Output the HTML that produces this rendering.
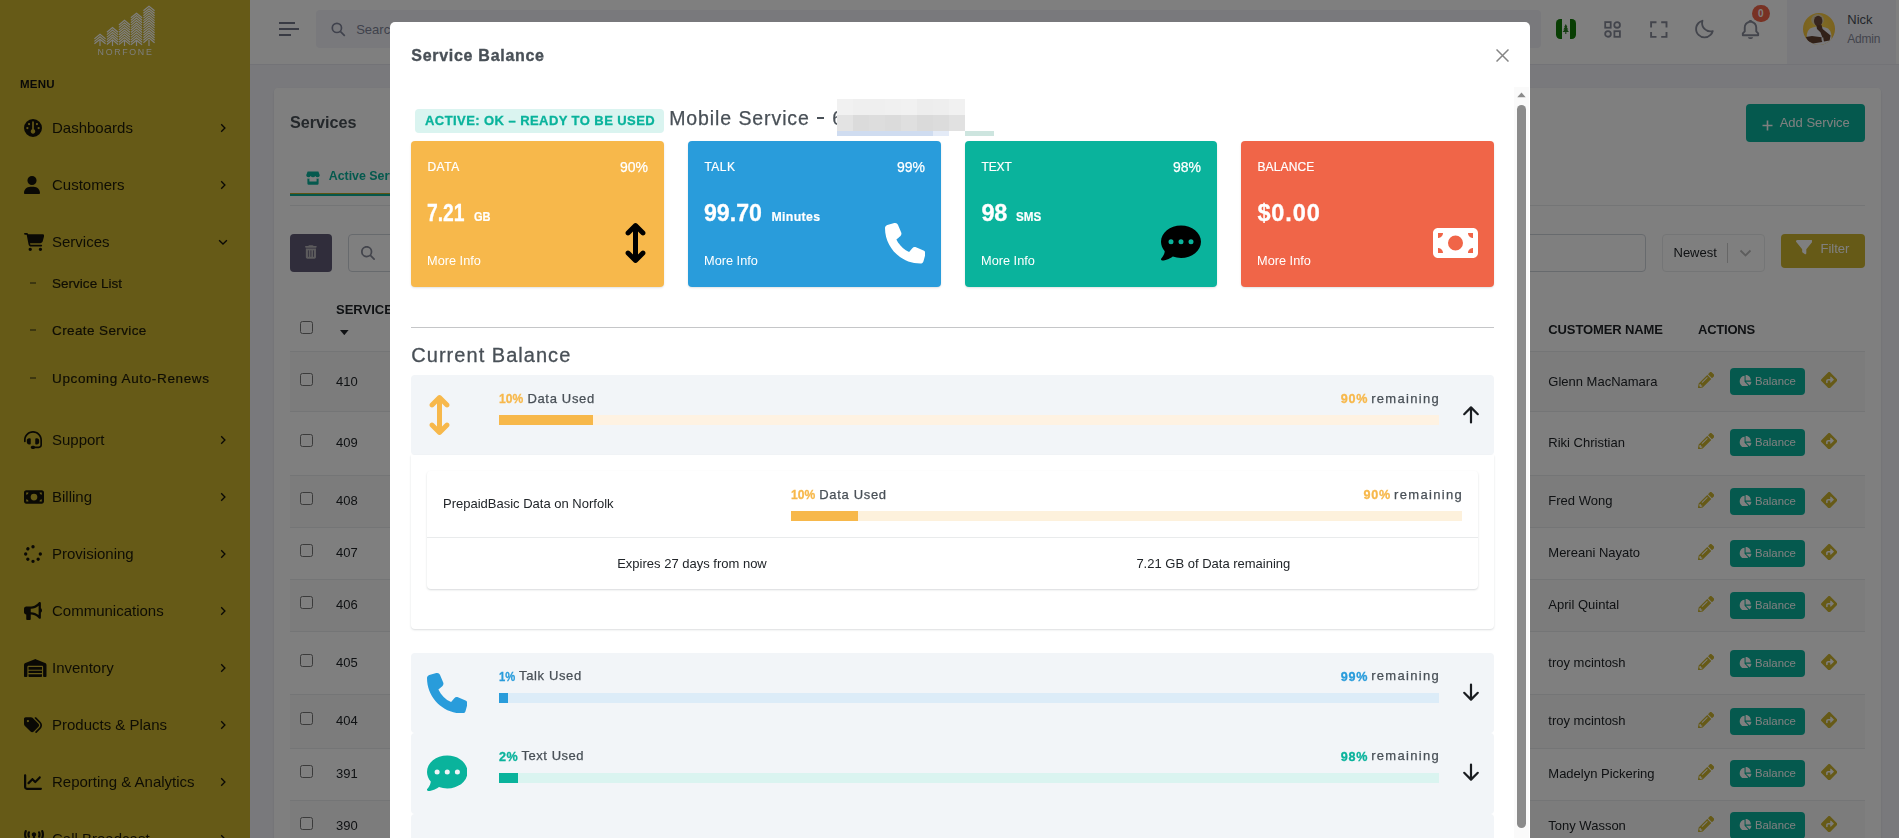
<!DOCTYPE html>
<html lang="en">
<head>
<meta charset="utf-8">
<title>Services</title>
<style>
*{box-sizing:border-box;margin:0;padding:0}
html,body{width:1899px;height:838px;overflow:hidden;background:#f3f3f9;font-family:"Liberation Sans",sans-serif;font-size:13px;color:#212529}
.abs{position:absolute}
#app{position:absolute;left:0;top:0;width:1899px;height:838px;overflow:hidden}
/* ---------- sidebar ---------- */
#sidebar{position:absolute;left:0;top:0;width:250px;height:838px;background:#ccb42e}
#sidebar .menu-title{position:absolute;left:20px;top:78px;font-size:11.5px;font-weight:bold;letter-spacing:.25px;color:#111}
.nav-item{position:absolute;left:0;width:250px;height:24px;color:#1d1a08;font-size:15px;line-height:24px}
.nav-item .ic{position:absolute;left:24px;top:3px;width:18px;height:18px}
.nav-item .ic svg{display:block;fill:#14120a}
.nav-item .tx{position:absolute;left:52px;top:0;white-space:nowrap}
.nav-item .chev{position:absolute;left:218px;top:7px;width:10px;height:10px}
.sub-item{position:absolute;left:0;width:250px;height:20px;color:#1d1a08;font-size:13.5px;line-height:20px}
.sub-item .dash{position:absolute;left:30px;top:9px;width:6px;height:2px;background:#7a6e20}
.sub-item .tx{position:absolute;left:52px;top:0;white-space:nowrap;-webkit-text-stroke:.2px #1d1a08}
/* ---------- topbar ---------- */
#topbar{position:absolute;left:250px;top:0;width:1649px;height:65px;background:#fff;border-bottom:1px solid #e6e6ee}
/* ---------- overlay & modal ---------- */
#overlay{position:absolute;left:0;top:0;width:1899px;height:838px;background:rgba(0,0,0,.5)}
#sidebar,#content,#modal{will-change:transform}
#content{position:absolute;left:0;top:0;width:1899px;height:838px}
#modal{position:absolute;left:390px;top:22px;width:1140px;height:830px;background:#fff;border-radius:5px 5px 0 0}
</style>
</head>
<body>
<div id="app">

<!-- SIDEBAR -->
<div id="sidebar">
  <svg class="abs" style="left:0;top:0" width="250" height="60" viewBox="0 0 250 60" fill="none" stroke="#fff" stroke-width="1.2" stroke-linejoin="miter"><polyline points="94.4,38.9 100.0,34.3 105.6,38.9"/><polyline points="94.4,41.4 100.0,36.8 105.6,41.4"/><polyline points="94.4,43.8 100.0,39.2 105.6,43.8"/><line x1="100" y1="40" x2="100" y2="46"/><polyline points="106.9,32.2 112.5,27.6 118.1,32.2"/><polyline points="106.9,34.6 112.5,30.1 118.1,34.6"/><polyline points="106.9,37.1 112.5,32.5 118.1,37.1"/><polyline points="106.9,39.6 112.5,35.0 118.1,39.6"/><polyline points="106.9,42.0 112.5,37.4 118.1,42.0"/><polyline points="106.9,44.5 112.5,39.9 118.1,44.5"/><line x1="112.5" y1="40" x2="112.5" y2="46"/><polyline points="118.9,25.0 124.5,20.4 130.1,25.0"/><polyline points="118.9,27.4 124.5,22.8 130.1,27.4"/><polyline points="118.9,29.9 124.5,25.3 130.1,29.9"/><polyline points="118.9,32.3 124.5,27.7 130.1,32.3"/><polyline points="118.9,34.8 124.5,30.2 130.1,34.8"/><polyline points="118.9,37.2 124.5,32.6 130.1,37.2"/><polyline points="118.9,39.7 124.5,35.1 130.1,39.7"/><polyline points="118.9,42.2 124.5,37.6 130.1,42.2"/><polyline points="118.9,44.6 124.5,40.0 130.1,44.6"/><line x1="124.5" y1="40" x2="124.5" y2="46"/><polyline points="130.9,17.8 136.5,13.2 142.1,17.8"/><polyline points="130.9,20.2 136.5,15.6 142.1,20.2"/><polyline points="130.9,22.7 136.5,18.1 142.1,22.7"/><polyline points="130.9,25.1 136.5,20.5 142.1,25.1"/><polyline points="130.9,27.6 136.5,23.0 142.1,27.6"/><polyline points="130.9,30.0 136.5,25.4 142.1,30.0"/><polyline points="130.9,32.5 136.5,27.9 142.1,32.5"/><polyline points="130.9,34.9 136.5,30.3 142.1,34.9"/><polyline points="130.9,37.4 136.5,32.8 142.1,37.4"/><polyline points="130.9,39.9 136.5,35.2 142.1,39.9"/><polyline points="130.9,42.3 136.5,37.7 142.1,42.3"/><polyline points="130.9,44.8 136.5,40.2 142.1,44.8"/><line x1="136.5" y1="40" x2="136.5" y2="46"/><polyline points="143.4,10.8 149.0,6.2 154.6,10.8"/><polyline points="143.4,13.2 149.0,8.7 154.6,13.2"/><polyline points="143.4,15.7 149.0,11.1 154.6,15.7"/><polyline points="143.4,18.1 149.0,13.6 154.6,18.1"/><polyline points="143.4,20.6 149.0,16.0 154.6,20.6"/><polyline points="143.4,23.0 149.0,18.4 154.6,23.0"/><polyline points="143.4,25.5 149.0,20.9 154.6,25.5"/><polyline points="143.4,27.9 149.0,23.3 154.6,27.9"/><polyline points="143.4,30.4 149.0,25.8 154.6,30.4"/><polyline points="143.4,32.8 149.0,28.2 154.6,32.8"/><polyline points="143.4,35.3 149.0,30.7 154.6,35.3"/><polyline points="143.4,37.8 149.0,33.1 154.6,37.8"/><polyline points="143.4,40.2 149.0,35.6 154.6,40.2"/><polyline points="143.4,42.7 149.0,38.1 154.6,42.7"/><line x1="149" y1="40" x2="149" y2="46"/></svg><div class="abs" style="left:97.6px;top:46.6px;width:60px;font-size:8.8px;font-weight:normal;letter-spacing:1.7px;color:#fbfbf4;white-space:nowrap;line-height:10px">NORFONE</div>
  <div class="menu-title">MENU</div>
<div class="nav-item" style="top:116px"><span class="ic" style="width:18px;height:18px;top:3.0px"><svg viewBox="0 0 512 512" style="width:18px;height:18px" preserveAspectRatio="none"><path d="M0 256a256 256 0 1 1 512 0A256 256 0 1 1 0 256zm320 96c0-26.900-16.500-49.900-40-59.300V88c0-13.300-10.700-24-24-24s-24 10.700-24 24V292.700c-23.500 9.500-40 32.500-40 59.300c0 35.300 28.700 64 64 64s64-28.700 64-64zM144 176a32 32 0 1 0 0-64 32 32 0 1 0 0 64zm-16 80a32 32 0 1 0 -64 0 32 32 0 1 0 64 0zm288 32a32 32 0 1 0 0-64 32 32 0 1 0 0 64zM400 144a32 32 0 1 0 -64 0 32 32 0 1 0 64 0z"/></svg></span><span class="tx">Dashboards</span><svg class="chev" viewBox="0 0 10 10"><path d="M3.2 1.3 L6.9 5 L3.2 8.7" fill="none" stroke="#14120a" stroke-width="1.35"/></svg></div>
<div class="nav-item" style="top:173px"><span class="ic" style="width:16px;height:18px;top:3.0px"><svg viewBox="0 0 448 512" style="width:16px;height:18px" preserveAspectRatio="none"><path d="M224 256A128 128 0 1 0 224 0a128 128 0 1 0 0 256zm-45.700 48C79.800 304 0 383.800 0 482.300C0 498.700 13.300 512 29.700 512H418.300c16.400 0 29.700-13.300 29.700-29.700C448 383.800 368.200 304 269.700 304H178.300z"/></svg></span><span class="tx">Customers</span><svg class="chev" viewBox="0 0 10 10"><path d="M3.2 1.3 L6.9 5 L3.2 8.7" fill="none" stroke="#14120a" stroke-width="1.35"/></svg></div>
<div class="nav-item" style="top:230px"><span class="ic" style="width:20.4px;height:18px;top:3.0px"><svg viewBox="0 0 576 512" style="width:20.4px;height:18px" preserveAspectRatio="none"><path d="M0 24C0 10.700 10.700 0 24 0H69.500c22 0 41.500 12.800 50.600 32h411c26.300 0 45.500 25 38.600 50.400l-41 152.300c-8.500 31.400-37 53.300-69.500 53.300H170.700l5.400 28.500c2.200 11.300 12.100 19.500 23.600 19.500H488c13.300 0 24 10.700 24 24s-10.700 24-24 24H199.700c-34.600 0-64.300-24.600-70.700-58.500L77.400 54.500c-.7-3.800-4-6.500-7.900-6.500H24C10.700 48 0 37.300 0 24zM128 464a48 48 0 1 1 96 0 48 48 0 1 1 -96 0zm336-48a48 48 0 1 1 0 96 48 48 0 1 1 0-96z"/></svg></span><span class="tx">Services</span><svg class="chev" viewBox="0 0 10 10"><path d="M1.1 3.3 L5 7.1 L8.9 3.3" fill="none" stroke="#14120a" stroke-width="1.35"/></svg></div>
<div class="nav-item" style="top:428px"><span class="ic" style="width:18px;height:18px;top:3.0px"><svg viewBox="0 0 512 512" style="width:18px;height:18px" preserveAspectRatio="none"><path d="M256 48C141.100 48 48 141.100 48 256v40c0 13.300-10.700 24-24 24s-24-10.700-24-24V256C0 114.600 114.600 0 256 0S512 114.600 512 256V400.100c0 48.600-39.400 88-88.100 88L313.600 488c-8.300 14.300-23.800 24-41.600 24H240c-26.500 0-48-21.500-48-48s21.500-48 48-48h32c17.800 0 33.300 9.700 41.600 24l110.400 .1c22.100 0 40-17.900 40-40V256c0-114.900-93.100-208-208-208zM144 208h16c17.700 0 32 14.300 32 32V352c0 17.700-14.300 32-32 32H144c-35.300 0-64-28.700-64-64V272c0-35.300 28.700-64 64-64zm224 0c35.300 0 64 28.700 64 64v48c0 35.300-28.700 64-64 64H352c-17.700 0-32-14.300-32-32V240c0-17.700 14.300-32 32-32h16z"/></svg></span><span class="tx">Support</span><svg class="chev" viewBox="0 0 10 10"><path d="M3.2 1.3 L6.9 5 L3.2 8.7" fill="none" stroke="#14120a" stroke-width="1.35"/></svg></div>
<div class="nav-item" style="top:485px"><span class="ic" style="width:20px;height:18px;top:3.0px"><svg viewBox="0 0 576 512" style="width:20px;height:18px" preserveAspectRatio="none"><path d="M64 64C28.700 64 0 92.700 0 128V384c0 35.300 28.700 64 64 64H512c35.300 0 64-28.700 64-64V128c0-35.300-28.700-64-64-64H64zm64 320H64V320c35.300 0 64 28.700 64 64zM64 192V128h64c0 35.300-28.700 64-64 64zM448 384c0-35.300 28.700-64 64-64v64H448zm64-192c-35.300 0-64-28.700-64-64h64v64zM288 160a96 96 0 1 1 0 192 96 96 0 1 1 0-192z"/></svg></span><span class="tx">Billing</span><svg class="chev" viewBox="0 0 10 10"><path d="M3.2 1.3 L6.9 5 L3.2 8.7" fill="none" stroke="#14120a" stroke-width="1.35"/></svg></div>
<div class="nav-item" style="top:542px"><span class="ic" style="width:18px;height:18px;top:3.0px"><svg viewBox="0 0 512 512" style="width:18px;height:18px" preserveAspectRatio="none"><path d="M304 48a48 48 0 1 0 -96 0 48 48 0 1 0 96 0zm0 416a48 48 0 1 0 -96 0 48 48 0 1 0 96 0zM48 304a48 48 0 1 0 0-96 48 48 0 1 0 0 96zm464-48a48 48 0 1 0 -96 0 48 48 0 1 0 96 0zM142.900 437A48 48 0 1 0 75 369.100 48 48 0 1 0 142.900 437zm0-294.200A48 48 0 1 0 75 75a48 48 0 1 0 67.900 67.900zM369.100 437A48 48 0 1 0 437 369.100 48 48 0 1 0 369.100 437z"/></svg></span><span class="tx">Provisioning</span><svg class="chev" viewBox="0 0 10 10"><path d="M3.2 1.3 L6.9 5 L3.2 8.7" fill="none" stroke="#14120a" stroke-width="1.35"/></svg></div>
<div class="nav-item" style="top:599px"><span class="ic" style="width:18px;height:18px;top:3.0px"><svg viewBox="0 0 512 512" style="width:18px;height:18px" preserveAspectRatio="none"><path d="M480 32c0-12.900-7.800-24.600-19.800-29.600s-25.700-2.200-34.900 6.900L381.700 53c-48 48-113.100 75-181 75H192 160 64c-35.300 0-64 28.700-64 64v96c0 35.300 28.700 64 64 64l0 128c0 17.700 14.300 32 32 32h64c17.700 0 32-14.300 32-32V352l8.700 0c67.900 0 133 27 181 75l43.600 43.600c9.200 9.200 22.900 11.900 34.900 6.900s19.800-16.600 19.800-29.600V300.400c18.600-8.800 32-32.500 32-60.400s-13.400-51.600-32-60.400V32zm-64 76.700V240 371.300C357.200 317.800 280.500 288 200.700 288H192V192h8.700c79.800 0 156.500-29.800 215.300-83.300z"/></svg></span><span class="tx">Communications</span><svg class="chev" viewBox="0 0 10 10"><path d="M3.2 1.3 L6.9 5 L3.2 8.7" fill="none" stroke="#14120a" stroke-width="1.35"/></svg></div>
<div class="nav-item" style="top:656px"><span class="ic" style="width:22.5px;height:18px;top:3.0px"><svg viewBox="0 0 640 512" style="width:22.5px;height:18px" preserveAspectRatio="none"><path d="M0 488V171.300c0-26.200 15.900-49.700 40.200-59.400L308.100 4.800c7.600-3.100 16.100-3.100 23.800 0L599.800 111.900c24.300 9.700 40.200 33.300 40.200 59.400V488c0 13.300-10.700 24-24 24H568c-13.300 0-24-10.700-24-24V224c0-17.700-14.300-32-32-32H128c-17.700 0-32 14.300-32 32V488c0 13.300-10.700 24-24 24H24c-13.300 0-24-10.700-24-24zm488 24l-336 0c-13.300 0-24-10.700-24-24V432H512l0 56c0 13.300-10.700 24-24 24zM128 400V336H512v64H128zm0-96V224H512l0 80H128z"/></svg></span><span class="tx">Inventory</span><svg class="chev" viewBox="0 0 10 10"><path d="M3.2 1.3 L6.9 5 L3.2 8.7" fill="none" stroke="#14120a" stroke-width="1.35"/></svg></div>
<div class="nav-item" style="top:713px"><span class="ic" style="width:18px;height:18px;top:3.0px"><svg viewBox="0 0 512 512" style="width:18px;height:18px" preserveAspectRatio="none"><path d="M345 39.100L472.800 168.400c52.400 53 52.400 138.200 0 191.200L360.800 472.900c-9.300 9.400-24.500 9.500-33.900 .2s-9.500-24.500-.2-33.900L438.600 325.900c33.900-34.300 33.900-89.400 0-123.700L310.900 72.900c-9.300-9.400-9.200-24.600 .2-33.900s24.600-9.200 33.900 .2zM0 229.500V80C0 53.500 21.500 32 48 32H197.500c17 0 33.300 6.700 45.300 18.700l168 168c25 25 25 65.500 0 90.500L277.300 442.700c-25 25-65.500 25-90.500 0l-168-168C6.700 262.700 0 246.500 0 229.500zM144 144a32 32 0 1 0 -64 0 32 32 0 1 0 64 0z"/></svg></span><span class="tx">Products &amp; Plans</span><svg class="chev" viewBox="0 0 10 10"><path d="M3.2 1.3 L6.9 5 L3.2 8.7" fill="none" stroke="#14120a" stroke-width="1.35"/></svg></div>
<div class="nav-item" style="top:770px"><span class="ic" style="width:18px;height:18px;top:3.0px"><svg viewBox="0 0 512 512" style="width:18px;height:18px" preserveAspectRatio="none"><path d="M64 64c0-17.700-14.300-32-32-32S0 46.300 0 64V400c0 44.200 35.800 80 80 80H480c17.700 0 32-14.300 32-32s-14.300-32-32-32H80c-8.800 0-16-7.200-16-16V64zm406.600 86.600c12.500-12.500 12.500-32.800 0-45.300s-32.800-12.500-45.300 0L320 210.700l-57.400-57.400c-12.500-12.500-32.800-12.500-45.300 0l-112 112c-12.500 12.500-12.500 32.800 0 45.300s32.800 12.500 45.300 0L240 221.300l57.400 57.400c12.500 12.500 32.800 12.500 45.300 0l128-128z"/></svg></span><span class="tx">Reporting &amp; Analytics</span><svg class="chev" viewBox="0 0 10 10"><path d="M3.2 1.3 L6.9 5 L3.2 8.7" fill="none" stroke="#14120a" stroke-width="1.35"/></svg></div>
<div class="nav-item" style="top:827px"><span class="ic" style="width:20px;height:18px;top:3.0px"><svg viewBox="0 0 576 512" style="width:20px;height:18px" preserveAspectRatio="none"><path d="M80.300 44C69.800 69.900 64 98.200 64 128s5.800 58.100 16.300 84c6.600 16.400-1.300 35-17.700 41.700s-35-1.300-41.700-17.700C7.400 202.600 0 166.100 0 128S7.400 53.400 20.900 20C27.600 3.600 46.200-4.300 62.600 2.300S86.900 27.600 80.300 44zM555.100 20C568.600 53.400 576 89.900 576 128s-7.400 74.600-20.900 108c-6.600 16.400-25.300 24.300-41.700 17.700S489.100 228.400 495.700 212c10.500-25.900 16.300-54.200 16.300-84s-5.800-58.100-16.300-84C489.100 27.600 497 9 513.400 2.300s35 1.300 41.700 17.700zM352 128c0 23.700-12.900 44.400-32 55.400V480c0 17.700-14.300 32-32 32s-32-14.300-32-32V183.400c-19.100-11.100-32-31.700-32-55.400c0-35.300 28.700-64 64-64s64 28.700 64 64zM170.600 76.800C163.800 92.400 160 109.700 160 128s3.800 35.600 10.600 51.200c7.100 16.200-.3 35.100-16.500 42.100s-35.100-.3-42.100-16.500c-10.300-23.600-16-49.600-16-76.800s5.700-53.200 16-76.800c7.100-16.200 25.900-23.600 42.100-16.500s23.600 25.900 16.500 42.100zM464 51.200c10.300 23.600 16 49.600 16 76.800s-5.700 53.200-16 76.800c-7.100 16.200-25.900 23.600-42.100 16.500s-23.600-25.900-16.500-42.100c6.800-15.600 10.600-32.900 10.600-51.200s-3.800-35.600-10.600-51.200c-7.100-16.200 .3-35.100 16.500-42.100s35.100 .3 42.100 16.500z"/></svg></span><span class="tx">Call Broadcast</span><svg class="chev" viewBox="0 0 10 10"><path d="M3.2 1.3 L6.9 5 L3.2 8.7" fill="none" stroke="#14120a" stroke-width="1.35"/></svg></div>
<div class="sub-item" style="top:273px"><span class="dash"></span><span class="tx" style="top:.5px;letter-spacing:0.02px">Service List</span></div>
<div class="sub-item" style="top:320px"><span class="dash"></span><span class="tx" style="top:.5px;letter-spacing:0.39px">Create Service</span></div>
<div class="sub-item" style="top:368px"><span class="dash"></span><span class="tx" style="top:.5px;letter-spacing:0.64px">Upcoming Auto-Renews</span></div>
</div>

<!-- TOPBAR -->
<div id="topbar">
<div class="abs" style="left:29px;top:22px;width:16px;height:2px;background:#727688"></div>
<div class="abs" style="left:29px;top:28px;width:20px;height:2px;background:#727688"></div>
<div class="abs" style="left:29px;top:34px;width:12px;height:2px;background:#727688"></div>
<div class="abs" style="left:66px;top:10px;width:1225px;height:38px;background:#f3f3f9;border-radius:4px"></div>
<svg class="abs" style="left:80.5px;top:21.8px" width="15" height="15" viewBox="0 0 15 15" fill="none" stroke="#80859a" stroke-width="1.7"><circle cx="5.9" cy="5.9" r="4.6"/><path d="M9.3 9.3 L13.8 13.8"/></svg>
<div class="abs" style="left:106.2px;top:22.2px;font-size:13px;line-height:16px;color:#7f8498">Search...</div>
<div class="abs" style="left:1306px;top:19px;width:20px;height:20px;border-radius:4.2px;overflow:hidden;background:#fff"><div class="abs" style="left:0;top:0;width:6.3px;height:20px;background:#107c06"></div><div class="abs" style="left:13.8px;top:0;width:6.2px;height:20px;background:#107c06"></div><svg class="abs" style="left:5.9px;top:4.7px" width="7.6" height="10" viewBox="0 0 7 10" preserveAspectRatio="none"><path d="M3.5 0 L5 3 L4.3 3 L5.8 5.5 L4.6 5.5 L6.5 8 L4 8 L4 10 L3 10 L3 8 L0.5 8 L2.4 5.5 L1.2 5.5 L2.7 3 L2 3 Z" fill="#2a7a22"/></svg></div>
<svg class="abs" style="left:1353px;top:20px" width="19" height="19" viewBox="0 0 19 19" fill="none" stroke="#878a99" stroke-width="1.8"><rect x="2.2" y="2.1" width="5.5" height="5.6"/><circle cx="14.1" cy="4.9" r="2.85"/><circle cx="5" cy="13.9" r="2.85"/><rect x="11.4" y="11.2" width="5.5" height="5.6"/></svg>
<svg class="abs" style="left:1399px;top:20px" width="20" height="20" viewBox="0 0 20 20" fill="none" stroke="#878a99" stroke-width="1.9"><path d="M2.1 7.5 V2.2 H7.5 M12.2 2.2 H17.5 V7.5 M17.5 12 V16.9 H12.2 M7.5 16.9 H2.1 V12"/></svg>
<svg class="abs" style="left:1443.4px;top:18px" width="22.5" height="22.5" viewBox="0 0 24 24"><path fill="#878a99" d="M20.742 13.045a8.088 8.088 0 0 1-2.077.271c-2.135 0-4.140-.830-5.646-2.336a8.025 8.025 0 0 1-2.064-7.723A1 1 0 0 0 9.730 2.034a10.014 10.014 0 0 0-4.489 2.582c-3.898 3.898-3.898 10.243 0 14.143a9.937 9.937 0 0 0 7.072 2.930 9.930 9.930 0 0 0 7.070-2.929 10.007 10.007 0 0 0 2.583-4.491 1.001 1.001 0 0 0-1.224-1.224zm-2.772 4.301a7.947 7.947 0 0 1-5.656 2.343 7.953 7.953 0 0 1-5.658-2.344c-3.118-3.119-3.118-8.195 0-11.314a7.923 7.923 0 0 1 2.060-1.483 10.027 10.027 0 0 0 2.890 7.848 9.972 9.972 0 0 0 7.848 2.891 8.036 8.036 0 0 1-1.484 2.059z"/></svg>
<svg class="abs" style="left:1489.2px;top:18px" width="23" height="23" viewBox="0 0 24 24"><path fill="#878a99" d="M19 13.586V10c0-3.217-2.185-5.927-5.145-6.742C13.562 2.520 12.846 2 12 2s-1.562.520-1.855 1.258C7.185 4.074 5 6.783 5 10v3.586l-1.707 1.707A.996.996 0 0 0 3 16v2a1 1 0 0 0 1 1h16a1 1 0 0 0 1-1v-2a.996.996 0 0 0-.293-.707L19 13.586zM19 17H5v-.586l1.707-1.707A.996.996 0 0 0 7 14v-4c0-2.757 2.243-5 5-5s5 2.243 5 5v4c0 .266.105.520.293.707L19 16.414V17zm-7 5a2.980 2.980 0 0 0 2.818-2H9.182A2.980 2.980 0 0 0 12 22z"/></svg>
<div class="abs" style="left:1502px;top:4.6px;width:17.8px;height:17.8px;border-radius:9px;background:#f06548;color:#fff;font-size:10px;font-weight:bold;text-align:center;line-height:18px">0</div>
<div class="abs" style="left:1537px;top:0;width:109px;height:64px;background:#f3f3f9"></div>
<div class="abs" style="left:1553px;top:13px;width:32px;height:32px;border-radius:16px;overflow:hidden;background:radial-gradient(circle at 50% 40%,#ffd84e 0,#f6c63e 60%,#e9b433 100%)"><svg width="32" height="32" viewBox="0 0 32 32" class="abs" style="left:0;top:0"><ellipse cx="14.6" cy="6.8" rx="6.4" ry="5.8" fill="#e3d3aa"/><ellipse cx="15.2" cy="8" rx="4.2" ry="5.3" fill="#6e4b3a"/><path d="M3.6 25 Q3.6 15.6 9.6 14.4 L13.5 13.4 L18.5 13.4 L22.4 14.4 Q28.6 15.6 28.6 25 L28.6 32 L3.6 32 Z" fill="#f3f3f7"/><path d="M13.4 12.6 L18.6 12 L19.6 16 L27.6 22.6 L26.6 27.6 L21 28.4 L17.4 19.2 L14 16 Z" fill="#62402f"/><path d="M2.8 24 L9 22.9 L18.6 24.3 L19.2 29 L10 30.4 L5 28.6 Z" fill="#62402f"/><rect x="18.7" y="24.6" width="1.7" height="3.2" fill="#ececee"/></svg></div>
<div class="abs" style="left:1597.3px;top:11.5px;font-size:13px;line-height:16px;color:#495057">Nick</div>
<div class="abs" style="left:1597.3px;top:31px;font-size:12px;line-height:16px;color:#878a99;letter-spacing:-.2px">Admin</div>
</div>

<!-- PAGE CONTENT -->
<div id="content">
<div class="abs" style="left:274px;top:88px;width:1607px;height:800px;background:#fff;border-radius:4px;box-shadow:0 1px 2px rgba(56,65,74,.15)"></div>
<div class="abs" style="left:290px;top:112px;font-size:16.2px;line-height:20px;color:#495057;font-weight:bold;letter-spacing:0">Services</div>
<div class="abs" style="left:1746px;top:104px;width:119px;height:38px;border-radius:4px;background:#0ab39c"></div>
<svg class="abs" style="left:1761.5px;top:119.6px" width="11" height="11" viewBox="0 0 11 11" stroke="#fff" stroke-width="1.6"><path d="M5.5 0.5 V10.5 M0.5 5.5 H10.5"/></svg>
<div class="abs" style="left:1779.7px;top:115.2px;font-size:13px;line-height:16px;color:#fff">Add Service</div>
<svg class="abs" style="left:306px;top:171px" width="14" height="14" viewBox="0 0 14 14"><path d="M1.6 0.4 H12.4 L13.8 4.2 Q13.6 6.3 11.6 6.3 Q10 6.3 9.3 5 Q8.5 6.3 7 6.3 Q5.5 6.3 4.7 5 Q4 6.3 2.4 6.3 Q0.4 6.3 0.2 4.2 Z M1.4 7.6 Q2.4 7.9 3.4 7.6 V10.6 H10.6 V7.6 Q11.6 7.9 12.6 7.6 V12.6 Q12.6 13.8 11.4 13.8 H2.6 Q1.4 13.8 1.4 12.6 Z" fill="#0ab39c"/></svg>
<div class="abs" style="left:328.7px;top:167.7px;font-size:12.4px;line-height:16px;font-weight:bold;color:#0ab39c;white-space:nowrap">Active Services</div>
<div class="abs" style="left:290px;top:193px;width:300px;height:3px;background:#bfa626"></div>
<div class="abs" style="left:290px;top:193.5px;width:300px;height:2px;background:#0cae97"></div>
<div class="abs" style="left:290px;top:205px;width:1575px;height:1px;background:#e9ebec"></div>
<div class="abs" style="left:290px;top:234px;width:42px;height:38px;border-radius:4px;background:#605b77"></div>
<svg class="abs" style="left:305.3px;top:245.3px" width="11.8" height="13.8" viewBox="0 0 448 512"><path d="M135.200 17.700C140.600 6.800 151.700 0 163.800 0H284.200c12.100 0 23.200 6.800 28.600 17.700L320 32h96c17.700 0 32 14.300 32 32s-14.300 32-32 32H32C14.300 96 0 81.700 0 64S14.300 32 32 32h96l7.200-14.300zM32 128H416V448c0 35.300-28.700 64-64 64H96c-35.300 0-64-28.700-64-64V128zm96 64c-8.800 0-16 7.200-16 16V432c0 8.800 7.200 16 16 16s16-7.200 16-16V208c0-8.800-7.200-16-16-16zm96 0c-8.800 0-16 7.200-16 16V432c0 8.800 7.200 16 16 16s16-7.200 16-16V208c0-8.800-7.200-16-16-16zm96 0c-8.800 0-16 7.200-16 16V432c0 8.800 7.200 16 16 16s16-7.200 16-16V208c0-8.800-7.200-16-16-16z" fill="#b9b6bb"/></svg>
<div class="abs" style="left:348px;top:234px;width:1298px;height:38px;border-radius:4px;border:1px solid #ced4da;background:#fff"></div>
<svg class="abs" style="left:361px;top:246px" width="14" height="14" viewBox="0 0 512 512"><path d="M416 208c0 45.900-14.900 88.300-40 122.700L502.600 457.400c12.500 12.500 12.500 32.800 0 45.300s-32.800 12.500-45.300 0L330.700 376c-34.400 25.200-76.800 40-122.700 40C93.100 416 0 322.900 0 208S93.100 0 208 0S416 93.100 416 208zM208 352a144 144 0 1 0 0-288 144 144 0 1 0 0 288z" fill="#878a99"/></svg>
<div class="abs" style="left:1662px;top:234px;width:103px;height:38px;border-radius:4px;border:1px solid #e9ebec;background:#fff"></div>
<div class="abs" style="left:1673.5px;top:245px;font-size:13px;line-height:16px;color:#212529">Newest</div>
<div class="abs" style="left:1727px;top:243px;width:1px;height:20px;background:#ccc"></div>
<svg class="abs" style="left:1739px;top:249px" width="13" height="9" viewBox="0 0 13 9" fill="none" stroke="#bbb" stroke-width="1.8"><path d="M1.5 1.5 L6.5 6.5 L11.5 1.5"/></svg>
<div class="abs" style="left:1781px;top:234px;width:84px;height:34px;border-radius:4px;background:#ccb42e"></div>
<svg class="abs" style="left:1795.8px;top:238.9px" width="16.5" height="16.3" viewBox="0 0 512 512" preserveAspectRatio="none"><path d="M3.900 54.900C10.500 40.900 24.500 32 40 32H472c15.500 0 29.500 8.900 36.100 22.900s4.600 30.500-5.200 42.500L320 320.900V448c0 12.100-6.800 23.200-17.700 28.600s-23.800 4.300-33.500-3l-64-48c-8.100-6-12.800-15.500-12.800-25.600V320.900L9 97.300C-.7 85.400-2.800 68.800 3.900 54.900z" fill="#fff"/></svg>
<div class="abs" style="left:1820.5px;top:240.5px;font-size:13px;line-height:16px;color:#fff">Filter</div>
<div class="abs" style="left:300px;top:321px;width:13px;height:13px;border:1px solid #767676;border-radius:2.5px;background:#fff"></div>
<div class="abs" style="left:336px;top:302px;font-size:13px;line-height:16px;font-weight:bold;color:#212529">SERVICE</div>
<svg class="abs" style="left:340.2px;top:330px" width="8.6" height="5.2" viewBox="0 0 10 6" preserveAspectRatio="none"><path d="M0 0 H10 L5 6 Z" fill="#212529"/></svg>
<div class="abs" style="left:1548.3px;top:321.5px;font-size:13px;line-height:16px;font-weight:bold;color:#212529;letter-spacing:-.12px">CUSTOMER NAME</div>
<div class="abs" style="left:1698px;top:321.5px;font-size:13px;line-height:16px;font-weight:bold;color:#212529;letter-spacing:-.22px">ACTIONS</div>
<div class="abs" style="left:290px;top:351px;width:1575px;height:1px;background:#e9ebec"></div>
<div class="abs" style="left:290px;top:411px;width:1575px;height:1px;background:#e9ebec"></div>
<div class="abs" style="left:290px;top:475px;width:1575px;height:1px;background:#e9ebec"></div>
<div class="abs" style="left:290px;top:527px;width:1575px;height:1px;background:#e9ebec"></div>
<div class="abs" style="left:290px;top:579px;width:1575px;height:1px;background:#e9ebec"></div>
<div class="abs" style="left:290px;top:631px;width:1575px;height:1px;background:#e9ebec"></div>
<div class="abs" style="left:290px;top:694px;width:1575px;height:1px;background:#e9ebec"></div>
<div class="abs" style="left:290px;top:748px;width:1575px;height:1px;background:#e9ebec"></div>
<div class="abs" style="left:290px;top:800px;width:1575px;height:1px;background:#e9ebec"></div>
<div class="abs" style="left:290px;top:352px;width:1575px;height:59px;background:rgba(0,0,0,.022)"></div>
<div class="abs" style="left:290px;top:476px;width:1575px;height:51px;background:rgba(0,0,0,.022)"></div>
<div class="abs" style="left:290px;top:580px;width:1575px;height:51px;background:rgba(0,0,0,.022)"></div>
<div class="abs" style="left:290px;top:695px;width:1575px;height:53px;background:rgba(0,0,0,.022)"></div>
<div class="abs" style="left:290px;top:801px;width:1575px;height:59px;background:rgba(0,0,0,.022)"></div>
<div class="abs" style="left:300px;top:373px;width:13px;height:13px;border:1px solid #767676;border-radius:2.5px;background:#fff"></div>
<div class="abs" style="left:336px;top:373.5px;font-size:13px;line-height:16px;color:#212529">410</div>
<div class="abs" style="left:1548.3px;top:373.5px;font-size:13px;line-height:16px;color:#212529;white-space:nowrap">Glenn MacNamara</div>
<svg class="abs" style="left:1697.7px;top:371.8px" width="16.2" height="16.2" viewBox="0 0 512 512"><path d="M497.9 142.1l-46.1 46.1c-4.7 4.7-12.3 4.7-17 0l-111-111c-4.7-4.7-4.7-12.3 0-17l46.1-46.1c18.7-18.7 49.1-18.7 67.9 0l60.1 60.1c18.8 18.7 18.8 49.1 0 67.900zM284.200 99.800L21.600 362.400.400 483.900c-2.900 16.400 11.400 30.600 27.800 27.800l121.500-21.300 262.600-262.600c4.700-4.700 4.700-12.300 0-17l-111-111c-4.800-4.700-12.400-4.700-17.100 0zM124.100 339.900c-5.500-5.500-5.500-14.300 0-19.800l154-154c5.500-5.500 14.300-5.500 19.800 0s5.500 14.300 0 19.800l-154 154c-5.500 5.500-14.300 5.500-19.800 0zM88 424h48v36.300l-64.500 11.300-31.100-31.100L51.700 376H88v48z" fill="#ccb42e"/></svg>
<div class="abs" style="left:1730px;top:368.0px;width:75px;height:27px;border-radius:4px;background:#0ab39c"></div>
<svg class="abs" style="left:1739.3px;top:374.7px" width="12.5" height="11.8" viewBox="0 0 576 512" preserveAspectRatio="none"><path d="M304 240V16.600c0-9 7-16.600 16-16.600C443.700 0 544 100.300 544 224c0 9-7.600 16-16.600 16H304zM32 272C32 150.700 122.100 50.300 239 34.300c9.200-1.300 17 6.100 17 15.400V288L412.500 444.500c6.700 6.700 6.200 17.700-1.500 23.100C371.800 495.600 323.800 512 272 512C139.500 512 32 404.600 32 272zm526.400 16c9.300 0 16.600 7.800 15.400 17c-7.700 55.900-34.600 105.600-73.900 142.300c-6 5.600-15.400 5.200-21.200-.7L320 288H558.400z" fill="#fff"/></svg>
<div class="abs" style="left:1754.9px;top:373.0px;font-size:11.375px;line-height:16px;color:#fff">Balance</div>
<svg class="abs" style="left:1820.6px;top:371.8px" width="16.4" height="16.4" viewBox="0 0 512 512"><path d="M227.700 11.700c15.600-15.600 40.900-15.600 56.600 0l216 216c15.600 15.600 15.600 40.900 0 56.600l-216 216c-15.600 15.600-40.900 15.600-56.600 0l-216-216c-15.600-15.600-15.600-40.900 0-56.600l216-216zm87.600 137c-4.600-4.600-11.500-5.900-17.400-3.500s-9.900 8.300-9.900 14.800v56H224c-35.300 0-64 28.700-64 64v48c0 13.300 10.700 24 24 24s24-10.700 24-24V280c0-8.800 7.200-16 16-16h64v56c0 6.500 3.900 12.300 9.900 14.800s12.900 1.100 17.400-3.500l80-80c6.200-6.200 6.200-16.400 0-22.600l-80-80z" fill="#ccb42e"/></svg>
<div class="abs" style="left:300px;top:434px;width:13px;height:13px;border:1px solid #767676;border-radius:2.5px;background:#fff"></div>
<div class="abs" style="left:336px;top:434.5px;font-size:13px;line-height:16px;color:#212529">409</div>
<div class="abs" style="left:1548.3px;top:434.5px;font-size:13px;line-height:16px;color:#212529;white-space:nowrap">Riki Christian</div>
<svg class="abs" style="left:1697.7px;top:432.8px" width="16.2" height="16.2" viewBox="0 0 512 512"><path d="M497.9 142.1l-46.1 46.1c-4.7 4.7-12.3 4.7-17 0l-111-111c-4.7-4.7-4.7-12.3 0-17l46.1-46.1c18.7-18.7 49.1-18.7 67.9 0l60.1 60.1c18.8 18.7 18.8 49.1 0 67.900zM284.200 99.800L21.600 362.400.400 483.900c-2.900 16.400 11.400 30.600 27.800 27.800l121.500-21.300 262.600-262.600c4.700-4.700 4.700-12.300 0-17l-111-111c-4.800-4.700-12.400-4.700-17.100 0zM124.100 339.900c-5.500-5.500-5.500-14.300 0-19.800l154-154c5.500-5.500 14.300-5.500 19.800 0s5.500 14.300 0 19.800l-154 154c-5.500 5.500-14.300 5.500-19.800 0zM88 424h48v36.300l-64.500 11.300-31.100-31.100L51.700 376H88v48z" fill="#ccb42e"/></svg>
<div class="abs" style="left:1730px;top:429.0px;width:75px;height:27px;border-radius:4px;background:#0ab39c"></div>
<svg class="abs" style="left:1739.3px;top:435.7px" width="12.5" height="11.8" viewBox="0 0 576 512" preserveAspectRatio="none"><path d="M304 240V16.600c0-9 7-16.600 16-16.600C443.700 0 544 100.300 544 224c0 9-7.600 16-16.600 16H304zM32 272C32 150.700 122.100 50.300 239 34.300c9.200-1.300 17 6.100 17 15.400V288L412.500 444.500c6.700 6.700 6.200 17.700-1.500 23.100C371.800 495.600 323.800 512 272 512C139.500 512 32 404.600 32 272zm526.400 16c9.300 0 16.600 7.800 15.400 17c-7.700 55.900-34.600 105.600-73.900 142.300c-6 5.600-15.400 5.200-21.200-.7L320 288H558.400z" fill="#fff"/></svg>
<div class="abs" style="left:1754.9px;top:434.0px;font-size:11.375px;line-height:16px;color:#fff">Balance</div>
<svg class="abs" style="left:1820.6px;top:432.8px" width="16.4" height="16.4" viewBox="0 0 512 512"><path d="M227.700 11.700c15.600-15.600 40.900-15.600 56.600 0l216 216c15.600 15.600 15.600 40.900 0 56.600l-216 216c-15.600 15.600-40.900 15.600-56.600 0l-216-216c-15.600-15.600-15.600-40.900 0-56.600l216-216zm87.600 137c-4.600-4.600-11.500-5.900-17.400-3.500s-9.900 8.300-9.900 14.800v56H224c-35.300 0-64 28.700-64 64v48c0 13.300 10.700 24 24 24s24-10.700 24-24V280c0-8.800 7.200-16 16-16h64v56c0 6.500 3.900 12.300 9.900 14.800s12.900 1.100 17.400-3.500l80-80c6.200-6.200 6.200-16.400 0-22.600l-80-80z" fill="#ccb42e"/></svg>
<div class="abs" style="left:300px;top:492px;width:13px;height:13px;border:1px solid #767676;border-radius:2.5px;background:#fff"></div>
<div class="abs" style="left:336px;top:493.3px;font-size:13px;line-height:16px;color:#212529">408</div>
<div class="abs" style="left:1548.3px;top:493.3px;font-size:13px;line-height:16px;color:#212529;white-space:nowrap">Fred Wong</div>
<svg class="abs" style="left:1697.7px;top:491.6px" width="16.2" height="16.2" viewBox="0 0 512 512"><path d="M497.9 142.1l-46.1 46.1c-4.7 4.7-12.3 4.7-17 0l-111-111c-4.7-4.7-4.7-12.3 0-17l46.1-46.1c18.7-18.7 49.1-18.7 67.9 0l60.1 60.1c18.8 18.7 18.8 49.1 0 67.900zM284.200 99.800L21.600 362.400.400 483.900c-2.900 16.400 11.400 30.600 27.800 27.800l121.500-21.300 262.600-262.600c4.700-4.700 4.700-12.300 0-17l-111-111c-4.800-4.700-12.400-4.700-17.100 0zM124.100 339.900c-5.500-5.500-5.500-14.300 0-19.800l154-154c5.500-5.500 14.300-5.500 19.800 0s5.500 14.300 0 19.800l-154 154c-5.500 5.500-14.300 5.500-19.800 0zM88 424h48v36.300l-64.500 11.300-31.100-31.100L51.700 376H88v48z" fill="#ccb42e"/></svg>
<div class="abs" style="left:1730px;top:487.8px;width:75px;height:27px;border-radius:4px;background:#0ab39c"></div>
<svg class="abs" style="left:1739.3px;top:494.5px" width="12.5" height="11.8" viewBox="0 0 576 512" preserveAspectRatio="none"><path d="M304 240V16.600c0-9 7-16.600 16-16.600C443.700 0 544 100.300 544 224c0 9-7.600 16-16.600 16H304zM32 272C32 150.700 122.100 50.300 239 34.300c9.200-1.300 17 6.100 17 15.400V288L412.500 444.500c6.700 6.700 6.200 17.700-1.500 23.100C371.800 495.600 323.800 512 272 512C139.500 512 32 404.600 32 272zm526.400 16c9.300 0 16.600 7.800 15.400 17c-7.700 55.900-34.600 105.600-73.900 142.300c-6 5.600-15.400 5.200-21.200-.7L320 288H558.400z" fill="#fff"/></svg>
<div class="abs" style="left:1754.9px;top:492.8px;font-size:11.375px;line-height:16px;color:#fff">Balance</div>
<svg class="abs" style="left:1820.6px;top:491.6px" width="16.4" height="16.4" viewBox="0 0 512 512"><path d="M227.700 11.700c15.600-15.600 40.900-15.600 56.600 0l216 216c15.600 15.600 15.600 40.900 0 56.600l-216 216c-15.600 15.600-40.900 15.600-56.600 0l-216-216c-15.600-15.600-15.600-40.900 0-56.600l216-216zm87.600 137c-4.600-4.600-11.500-5.900-17.400-3.500s-9.900 8.300-9.900 14.800v56H224c-35.300 0-64 28.700-64 64v48c0 13.300 10.700 24 24 24s24-10.700 24-24V280c0-8.800 7.200-16 16-16h64v56c0 6.500 3.900 12.300 9.900 14.800s12.900 1.100 17.400-3.500l80-80c6.200-6.200 6.200-16.400 0-22.600l-80-80z" fill="#ccb42e"/></svg>
<div class="abs" style="left:300px;top:544px;width:13px;height:13px;border:1px solid #767676;border-radius:2.5px;background:#fff"></div>
<div class="abs" style="left:336px;top:545.3px;font-size:13px;line-height:16px;color:#212529">407</div>
<div class="abs" style="left:1548.3px;top:545.3px;font-size:13px;line-height:16px;color:#212529;white-space:nowrap">Mereani Nayato</div>
<svg class="abs" style="left:1697.7px;top:543.6px" width="16.2" height="16.2" viewBox="0 0 512 512"><path d="M497.9 142.1l-46.1 46.1c-4.7 4.7-12.3 4.7-17 0l-111-111c-4.7-4.7-4.7-12.3 0-17l46.1-46.1c18.7-18.7 49.1-18.7 67.9 0l60.1 60.1c18.8 18.7 18.8 49.1 0 67.900zM284.200 99.800L21.600 362.400.400 483.900c-2.900 16.400 11.400 30.600 27.800 27.800l121.500-21.300 262.600-262.600c4.700-4.700 4.700-12.300 0-17l-111-111c-4.800-4.700-12.400-4.700-17.100 0zM124.100 339.900c-5.500-5.500-5.500-14.300 0-19.800l154-154c5.500-5.500 14.300-5.500 19.800 0s5.500 14.300 0 19.800l-154 154c-5.500 5.500-14.300 5.500-19.800 0zM88 424h48v36.300l-64.500 11.300-31.100-31.100L51.700 376H88v48z" fill="#ccb42e"/></svg>
<div class="abs" style="left:1730px;top:539.8px;width:75px;height:27px;border-radius:4px;background:#0ab39c"></div>
<svg class="abs" style="left:1739.3px;top:546.5px" width="12.5" height="11.8" viewBox="0 0 576 512" preserveAspectRatio="none"><path d="M304 240V16.600c0-9 7-16.600 16-16.600C443.700 0 544 100.300 544 224c0 9-7.600 16-16.600 16H304zM32 272C32 150.700 122.100 50.300 239 34.300c9.200-1.300 17 6.100 17 15.400V288L412.500 444.500c6.700 6.700 6.200 17.700-1.500 23.100C371.800 495.600 323.800 512 272 512C139.500 512 32 404.600 32 272zm526.400 16c9.300 0 16.600 7.800 15.400 17c-7.700 55.900-34.600 105.600-73.900 142.300c-6 5.600-15.400 5.200-21.200-.7L320 288H558.400z" fill="#fff"/></svg>
<div class="abs" style="left:1754.9px;top:544.8px;font-size:11.375px;line-height:16px;color:#fff">Balance</div>
<svg class="abs" style="left:1820.6px;top:543.6px" width="16.4" height="16.4" viewBox="0 0 512 512"><path d="M227.700 11.700c15.600-15.600 40.900-15.600 56.600 0l216 216c15.600 15.600 15.600 40.900 0 56.600l-216 216c-15.600 15.600-40.900 15.600-56.600 0l-216-216c-15.600-15.600-15.600-40.900 0-56.600l216-216zm87.600 137c-4.600-4.600-11.500-5.900-17.400-3.500s-9.900 8.300-9.900 14.800v56H224c-35.300 0-64 28.700-64 64v48c0 13.300 10.700 24 24 24s24-10.700 24-24V280c0-8.800 7.200-16 16-16h64v56c0 6.500 3.900 12.300 9.900 14.800s12.900 1.100 17.400-3.500l80-80c6.200-6.200 6.200-16.400 0-22.600l-80-80z" fill="#ccb42e"/></svg>
<div class="abs" style="left:300px;top:596px;width:13px;height:13px;border:1px solid #767676;border-radius:2.5px;background:#fff"></div>
<div class="abs" style="left:336px;top:597.3px;font-size:13px;line-height:16px;color:#212529">406</div>
<div class="abs" style="left:1548.3px;top:597.3px;font-size:13px;line-height:16px;color:#212529;white-space:nowrap">April Quintal</div>
<svg class="abs" style="left:1697.7px;top:595.6px" width="16.2" height="16.2" viewBox="0 0 512 512"><path d="M497.9 142.1l-46.1 46.1c-4.7 4.7-12.3 4.7-17 0l-111-111c-4.7-4.7-4.7-12.3 0-17l46.1-46.1c18.7-18.7 49.1-18.7 67.9 0l60.1 60.1c18.8 18.7 18.8 49.1 0 67.900zM284.200 99.800L21.600 362.400.400 483.900c-2.900 16.400 11.400 30.600 27.800 27.800l121.500-21.300 262.600-262.600c4.700-4.700 4.700-12.300 0-17l-111-111c-4.800-4.700-12.400-4.700-17.100 0zM124.100 339.900c-5.500-5.500-5.500-14.300 0-19.800l154-154c5.500-5.500 14.300-5.500 19.800 0s5.500 14.300 0 19.800l-154 154c-5.500 5.500-14.300 5.500-19.800 0zM88 424h48v36.300l-64.500 11.300-31.100-31.100L51.700 376H88v48z" fill="#ccb42e"/></svg>
<div class="abs" style="left:1730px;top:591.8px;width:75px;height:27px;border-radius:4px;background:#0ab39c"></div>
<svg class="abs" style="left:1739.3px;top:598.5px" width="12.5" height="11.8" viewBox="0 0 576 512" preserveAspectRatio="none"><path d="M304 240V16.600c0-9 7-16.600 16-16.600C443.700 0 544 100.300 544 224c0 9-7.600 16-16.600 16H304zM32 272C32 150.700 122.100 50.300 239 34.300c9.200-1.300 17 6.100 17 15.400V288L412.500 444.500c6.700 6.700 6.200 17.700-1.500 23.100C371.800 495.600 323.800 512 272 512C139.500 512 32 404.600 32 272zm526.400 16c9.300 0 16.600 7.800 15.400 17c-7.700 55.900-34.600 105.600-73.900 142.300c-6 5.600-15.400 5.200-21.200-.7L320 288H558.400z" fill="#fff"/></svg>
<div class="abs" style="left:1754.9px;top:596.8px;font-size:11.375px;line-height:16px;color:#fff">Balance</div>
<svg class="abs" style="left:1820.6px;top:595.6px" width="16.4" height="16.4" viewBox="0 0 512 512"><path d="M227.700 11.700c15.600-15.600 40.900-15.600 56.600 0l216 216c15.600 15.600 15.600 40.900 0 56.600l-216 216c-15.600 15.600-40.900 15.600-56.600 0l-216-216c-15.600-15.600-15.600-40.900 0-56.600l216-216zm87.600 137c-4.600-4.600-11.500-5.900-17.400-3.500s-9.900 8.300-9.900 14.800v56H224c-35.300 0-64 28.700-64 64v48c0 13.300 10.700 24 24 24s24-10.700 24-24V280c0-8.800 7.200-16 16-16h64v56c0 6.500 3.900 12.300 9.900 14.800s12.900 1.100 17.400-3.500l80-80c6.200-6.200 6.200-16.400 0-22.600l-80-80z" fill="#ccb42e"/></svg>
<div class="abs" style="left:300px;top:654px;width:13px;height:13px;border:1px solid #767676;border-radius:2.5px;background:#fff"></div>
<div class="abs" style="left:336px;top:655.3px;font-size:13px;line-height:16px;color:#212529">405</div>
<div class="abs" style="left:1548.3px;top:655.3px;font-size:13px;line-height:16px;color:#212529;white-space:nowrap">troy mcintosh</div>
<svg class="abs" style="left:1697.7px;top:653.6px" width="16.2" height="16.2" viewBox="0 0 512 512"><path d="M497.9 142.1l-46.1 46.1c-4.7 4.7-12.3 4.7-17 0l-111-111c-4.7-4.7-4.7-12.3 0-17l46.1-46.1c18.7-18.7 49.1-18.7 67.9 0l60.1 60.1c18.8 18.7 18.8 49.1 0 67.900zM284.200 99.800L21.600 362.400.400 483.900c-2.900 16.400 11.400 30.600 27.800 27.800l121.500-21.300 262.600-262.600c4.700-4.700 4.700-12.300 0-17l-111-111c-4.800-4.700-12.400-4.700-17.100 0zM124.100 339.900c-5.500-5.500-5.500-14.300 0-19.800l154-154c5.500-5.500 14.300-5.500 19.800 0s5.500 14.300 0 19.800l-154 154c-5.500 5.500-14.300 5.500-19.800 0zM88 424h48v36.300l-64.500 11.300-31.100-31.100L51.700 376H88v48z" fill="#ccb42e"/></svg>
<div class="abs" style="left:1730px;top:649.8px;width:75px;height:27px;border-radius:4px;background:#0ab39c"></div>
<svg class="abs" style="left:1739.3px;top:656.5px" width="12.5" height="11.8" viewBox="0 0 576 512" preserveAspectRatio="none"><path d="M304 240V16.600c0-9 7-16.600 16-16.600C443.700 0 544 100.300 544 224c0 9-7.600 16-16.600 16H304zM32 272C32 150.700 122.100 50.300 239 34.300c9.200-1.300 17 6.100 17 15.400V288L412.500 444.500c6.700 6.700 6.200 17.700-1.500 23.100C371.800 495.600 323.800 512 272 512C139.500 512 32 404.600 32 272zm526.400 16c9.300 0 16.600 7.800 15.400 17c-7.700 55.900-34.600 105.600-73.900 142.300c-6 5.600-15.400 5.200-21.200-.7L320 288H558.400z" fill="#fff"/></svg>
<div class="abs" style="left:1754.9px;top:654.8px;font-size:11.375px;line-height:16px;color:#fff">Balance</div>
<svg class="abs" style="left:1820.6px;top:653.6px" width="16.4" height="16.4" viewBox="0 0 512 512"><path d="M227.700 11.700c15.600-15.600 40.900-15.600 56.600 0l216 216c15.600 15.600 15.600 40.900 0 56.600l-216 216c-15.600 15.600-40.900 15.600-56.600 0l-216-216c-15.600-15.600-15.600-40.900 0-56.600l216-216zm87.600 137c-4.600-4.600-11.500-5.900-17.400-3.500s-9.900 8.300-9.900 14.800v56H224c-35.300 0-64 28.700-64 64v48c0 13.300 10.700 24 24 24s24-10.700 24-24V280c0-8.800 7.200-16 16-16h64v56c0 6.500 3.900 12.300 9.900 14.800s12.900 1.100 17.400-3.500l80-80c6.200-6.200 6.200-16.400 0-22.600l-80-80z" fill="#ccb42e"/></svg>
<div class="abs" style="left:300px;top:712px;width:13px;height:13px;border:1px solid #767676;border-radius:2.5px;background:#fff"></div>
<div class="abs" style="left:336px;top:713.3px;font-size:13px;line-height:16px;color:#212529">404</div>
<div class="abs" style="left:1548.3px;top:713.3px;font-size:13px;line-height:16px;color:#212529;white-space:nowrap">troy mcintosh</div>
<svg class="abs" style="left:1697.7px;top:711.6px" width="16.2" height="16.2" viewBox="0 0 512 512"><path d="M497.9 142.1l-46.1 46.1c-4.7 4.7-12.3 4.7-17 0l-111-111c-4.7-4.7-4.7-12.3 0-17l46.1-46.1c18.7-18.7 49.1-18.7 67.9 0l60.1 60.1c18.8 18.7 18.8 49.1 0 67.900zM284.200 99.800L21.600 362.400.400 483.900c-2.900 16.400 11.400 30.600 27.800 27.800l121.500-21.300 262.600-262.600c4.700-4.700 4.700-12.300 0-17l-111-111c-4.800-4.700-12.400-4.700-17.100 0zM124.100 339.900c-5.500-5.500-5.500-14.300 0-19.800l154-154c5.500-5.500 14.300-5.500 19.800 0s5.500 14.300 0 19.800l-154 154c-5.500 5.500-14.300 5.500-19.800 0zM88 424h48v36.300l-64.500 11.300-31.100-31.100L51.700 376H88v48z" fill="#ccb42e"/></svg>
<div class="abs" style="left:1730px;top:707.8px;width:75px;height:27px;border-radius:4px;background:#0ab39c"></div>
<svg class="abs" style="left:1739.3px;top:714.5px" width="12.5" height="11.8" viewBox="0 0 576 512" preserveAspectRatio="none"><path d="M304 240V16.600c0-9 7-16.600 16-16.600C443.700 0 544 100.300 544 224c0 9-7.600 16-16.600 16H304zM32 272C32 150.700 122.100 50.300 239 34.300c9.200-1.300 17 6.100 17 15.400V288L412.500 444.500c6.700 6.700 6.200 17.700-1.500 23.100C371.800 495.600 323.800 512 272 512C139.500 512 32 404.600 32 272zm526.400 16c9.300 0 16.600 7.800 15.400 17c-7.700 55.900-34.600 105.600-73.900 142.300c-6 5.600-15.400 5.200-21.200-.7L320 288H558.400z" fill="#fff"/></svg>
<div class="abs" style="left:1754.9px;top:712.8px;font-size:11.375px;line-height:16px;color:#fff">Balance</div>
<svg class="abs" style="left:1820.6px;top:711.6px" width="16.4" height="16.4" viewBox="0 0 512 512"><path d="M227.700 11.700c15.600-15.600 40.900-15.600 56.600 0l216 216c15.600 15.600 15.600 40.900 0 56.600l-216 216c-15.600 15.600-40.900 15.600-56.600 0l-216-216c-15.600-15.600-15.600-40.900 0-56.600l216-216zm87.600 137c-4.600-4.600-11.500-5.900-17.400-3.500s-9.900 8.300-9.900 14.800v56H224c-35.300 0-64 28.700-64 64v48c0 13.300 10.700 24 24 24s24-10.700 24-24V280c0-8.800 7.200-16 16-16h64v56c0 6.500 3.900 12.300 9.900 14.800s12.900 1.100 17.400-3.500l80-80c6.200-6.200 6.200-16.400 0-22.600l-80-80z" fill="#ccb42e"/></svg>
<div class="abs" style="left:300px;top:765px;width:13px;height:13px;border:1px solid #767676;border-radius:2.5px;background:#fff"></div>
<div class="abs" style="left:336px;top:765.5px;font-size:13px;line-height:16px;color:#212529">391</div>
<div class="abs" style="left:1548.3px;top:765.5px;font-size:13px;line-height:16px;color:#212529;white-space:nowrap">Madelyn Pickering</div>
<svg class="abs" style="left:1697.7px;top:763.8px" width="16.2" height="16.2" viewBox="0 0 512 512"><path d="M497.9 142.1l-46.1 46.1c-4.7 4.7-12.3 4.7-17 0l-111-111c-4.7-4.7-4.7-12.3 0-17l46.1-46.1c18.7-18.7 49.1-18.7 67.9 0l60.1 60.1c18.8 18.7 18.8 49.1 0 67.900zM284.200 99.800L21.600 362.400.400 483.900c-2.900 16.400 11.400 30.600 27.800 27.800l121.500-21.300 262.600-262.600c4.700-4.700 4.700-12.300 0-17l-111-111c-4.800-4.700-12.400-4.700-17.100 0zM124.100 339.900c-5.500-5.500-5.500-14.300 0-19.800l154-154c5.500-5.500 14.300-5.500 19.800 0s5.500 14.300 0 19.800l-154 154c-5.500 5.500-14.300 5.500-19.800 0zM88 424h48v36.300l-64.500 11.300-31.100-31.100L51.700 376H88v48z" fill="#ccb42e"/></svg>
<div class="abs" style="left:1730px;top:760.0px;width:75px;height:27px;border-radius:4px;background:#0ab39c"></div>
<svg class="abs" style="left:1739.3px;top:766.7px" width="12.5" height="11.8" viewBox="0 0 576 512" preserveAspectRatio="none"><path d="M304 240V16.600c0-9 7-16.600 16-16.600C443.700 0 544 100.300 544 224c0 9-7.600 16-16.600 16H304zM32 272C32 150.700 122.100 50.300 239 34.300c9.200-1.300 17 6.100 17 15.400V288L412.500 444.500c6.700 6.700 6.200 17.700-1.500 23.100C371.800 495.600 323.800 512 272 512C139.500 512 32 404.600 32 272zm526.400 16c9.300 0 16.600 7.800 15.400 17c-7.700 55.900-34.600 105.600-73.900 142.300c-6 5.600-15.400 5.200-21.200-.7L320 288H558.400z" fill="#fff"/></svg>
<div class="abs" style="left:1754.9px;top:765.0px;font-size:11.375px;line-height:16px;color:#fff">Balance</div>
<svg class="abs" style="left:1820.6px;top:763.8px" width="16.4" height="16.4" viewBox="0 0 512 512"><path d="M227.700 11.700c15.600-15.600 40.900-15.600 56.600 0l216 216c15.600 15.600 15.600 40.900 0 56.600l-216 216c-15.600 15.600-40.900 15.600-56.600 0l-216-216c-15.600-15.600-15.600-40.900 0-56.600l216-216zm87.600 137c-4.600-4.600-11.500-5.900-17.400-3.500s-9.900 8.300-9.900 14.800v56H224c-35.300 0-64 28.700-64 64v48c0 13.300 10.700 24 24 24s24-10.700 24-24V280c0-8.800 7.200-16 16-16h64v56c0 6.500 3.900 12.300 9.900 14.800s12.900 1.100 17.400-3.500l80-80c6.200-6.200 6.200-16.400 0-22.600l-80-80z" fill="#ccb42e"/></svg>
<div class="abs" style="left:300px;top:817px;width:13px;height:13px;border:1px solid #767676;border-radius:2.5px;background:#fff"></div>
<div class="abs" style="left:336px;top:817.5px;font-size:13px;line-height:16px;color:#212529">390</div>
<div class="abs" style="left:1548.3px;top:817.5px;font-size:13px;line-height:16px;color:#212529;white-space:nowrap">Tony Wasson</div>
<svg class="abs" style="left:1697.7px;top:815.8px" width="16.2" height="16.2" viewBox="0 0 512 512"><path d="M497.9 142.1l-46.1 46.1c-4.7 4.7-12.3 4.7-17 0l-111-111c-4.7-4.7-4.7-12.3 0-17l46.1-46.1c18.7-18.7 49.1-18.7 67.9 0l60.1 60.1c18.8 18.7 18.8 49.1 0 67.900zM284.200 99.800L21.600 362.400.400 483.900c-2.900 16.400 11.400 30.600 27.800 27.800l121.500-21.300 262.600-262.600c4.700-4.700 4.700-12.300 0-17l-111-111c-4.800-4.700-12.400-4.700-17.100 0zM124.100 339.900c-5.500-5.500-5.500-14.300 0-19.800l154-154c5.500-5.500 14.300-5.500 19.800 0s5.500 14.300 0 19.800l-154 154c-5.500 5.500-14.300 5.500-19.800 0zM88 424h48v36.300l-64.500 11.300-31.100-31.100L51.700 376H88v48z" fill="#ccb42e"/></svg>
<div class="abs" style="left:1730px;top:812.0px;width:75px;height:27px;border-radius:4px;background:#0ab39c"></div>
<svg class="abs" style="left:1739.3px;top:818.7px" width="12.5" height="11.8" viewBox="0 0 576 512" preserveAspectRatio="none"><path d="M304 240V16.600c0-9 7-16.600 16-16.600C443.700 0 544 100.300 544 224c0 9-7.600 16-16.600 16H304zM32 272C32 150.700 122.100 50.300 239 34.300c9.200-1.300 17 6.100 17 15.400V288L412.500 444.500c6.700 6.700 6.200 17.700-1.500 23.100C371.800 495.600 323.800 512 272 512C139.500 512 32 404.600 32 272zm526.400 16c9.300 0 16.600 7.800 15.400 17c-7.700 55.900-34.600 105.600-73.900 142.300c-6 5.600-15.400 5.200-21.200-.7L320 288H558.400z" fill="#fff"/></svg>
<div class="abs" style="left:1754.9px;top:817.0px;font-size:11.375px;line-height:16px;color:#fff">Balance</div>
<svg class="abs" style="left:1820.6px;top:815.8px" width="16.4" height="16.4" viewBox="0 0 512 512"><path d="M227.700 11.700c15.600-15.600 40.900-15.600 56.600 0l216 216c15.600 15.600 15.600 40.900 0 56.600l-216 216c-15.600 15.600-40.900 15.600-56.600 0l-216-216c-15.600-15.600-15.600-40.900 0-56.600l216-216zm87.600 137c-4.600-4.600-11.500-5.900-17.400-3.500s-9.900 8.300-9.900 14.800v56H224c-35.300 0-64 28.700-64 64v48c0 13.300 10.700 24 24 24s24-10.700 24-24V280c0-8.800 7.200-16 16-16h64v56c0 6.500 3.900 12.300 9.900 14.800s12.900 1.100 17.400-3.500l80-80c6.200-6.200 6.200-16.400 0-22.600l-80-80z" fill="#ccb42e"/></svg>
</div>

<!-- OVERLAY -->
<div id="overlay"></div>

<!-- MODAL -->
<div id="modal">
<div class="abs" style="left:21.3px;top:23.6px;font-size:16px;line-height:20px;font-weight:bold;color:#495057;letter-spacing:0.711px;white-space:nowrap;-webkit-text-stroke:.35px #495057;">Service Balance</div>
<svg class="abs" style="left:1106px;top:27px" width="13" height="13" viewBox="0 0 13 13" stroke="#858585" stroke-width="1.5" fill="none"><path d="M0.5 0.5 L12.5 12.5 M12.5 0.5 L0.5 12.5"/></svg>
<div class="abs" style="left:1124.0px;top:65.0px;width:15.0px;height:773.0px;background:#fafafa"></div>
<svg class="abs" style="left:1127px;top:70.2px" width="9" height="5.6" viewBox="0 0 9 6"><path d="M0 5.5 L4.5 0.5 L9 5.5 Z" fill="#8b8b8b"/></svg>
<div class="abs" style="left:1127.0px;top:83.0px;width:9.0px;height:723.0px;background:#8b8b8b;border-radius:4.5px"></div>
<div class="abs" style="left:25.0px;top:87.0px;width:249.0px;height:23.5px;background:#daf4f0;border-radius:4px"></div>
<div class="abs" style="left:35.0px;top:90.9px;font-size:13px;line-height:16px;font-weight:bold;color:#0ab39c;letter-spacing:0.430px;white-space:nowrap;-webkit-text-stroke:.3px #0ab39c;">ACTIVE: OK – READY TO BE USED</div>
<div class="abs" style="left:279.2px;top:83.5px;font-size:19.5px;line-height:24px;font-weight:normal;color:#495057;letter-spacing:0.908px;white-space:nowrap;-webkit-text-stroke:.25px #495057;">Mobile Service</div>
<div class="abs" style="left:426.7px;top:95.3px;width:7.5px;height:1.6px;background:#495057"></div>
<div class="abs" style="left:442.3px;top:83.5px;font-size:19.5px;line-height:24px;font-weight:normal;color:#495057;letter-spacing:0.000px;white-space:nowrap;-webkit-text-stroke:.25px #495057;">6</div>
<div class="abs" style="left:447.0px;top:77.0px;width:16.0px;height:16.0px;background:#f1f1f1"></div>
<div class="abs" style="left:447.0px;top:93.0px;width:16.0px;height:16.0px;background:#e3e3e3"></div>
<div class="abs" style="left:463.0px;top:77.0px;width:16.0px;height:16.0px;background:#efefef"></div>
<div class="abs" style="left:463.0px;top:93.0px;width:16.0px;height:16.0px;background:#dbdbdb"></div>
<div class="abs" style="left:479.0px;top:77.0px;width:16.0px;height:16.0px;background:#efefef"></div>
<div class="abs" style="left:479.0px;top:93.0px;width:16.0px;height:16.0px;background:#dddddd"></div>
<div class="abs" style="left:495.0px;top:77.0px;width:16.0px;height:16.0px;background:#f0f0f0"></div>
<div class="abs" style="left:495.0px;top:93.0px;width:16.0px;height:16.0px;background:#dbdbdb"></div>
<div class="abs" style="left:511.0px;top:77.0px;width:16.0px;height:16.0px;background:#f1f1f1"></div>
<div class="abs" style="left:511.0px;top:93.0px;width:16.0px;height:16.0px;background:#dfdfdf"></div>
<div class="abs" style="left:527.0px;top:77.0px;width:16.0px;height:16.0px;background:#ededed"></div>
<div class="abs" style="left:527.0px;top:93.0px;width:16.0px;height:16.0px;background:#dadada"></div>
<div class="abs" style="left:543.0px;top:77.0px;width:16.0px;height:16.0px;background:#eeeeee"></div>
<div class="abs" style="left:543.0px;top:93.0px;width:16.0px;height:16.0px;background:#dcdcdc"></div>
<div class="abs" style="left:559.0px;top:77.0px;width:16.0px;height:16.0px;background:#f1f1f1"></div>
<div class="abs" style="left:559.0px;top:93.0px;width:16.0px;height:16.0px;background:#e1e1e1"></div>
<div class="abs" style="left:447.0px;top:109.0px;width:96.0px;height:4.5px;background:#cfdcf0"></div>
<div class="abs" style="left:543.0px;top:109.0px;width:16.0px;height:4.5px;background:#e4ebf7"></div>
<div class="abs" style="left:575.0px;top:109.0px;width:29.0px;height:4.5px;background:#cde5df"></div>
<div class="abs" style="left:21.0px;top:119.0px;width:253.0px;height:146.0px;background:#f7b84b;border-radius:4px;box-shadow:0 1px 2px rgba(56,65,74,.15)"></div>
<div class="abs" style="left:37.4px;top:138.1px;font-size:12px;line-height:15px;font-weight:normal;color:#fff;letter-spacing:0.555px;white-space:nowrap;-webkit-text-stroke:.2px #fff;">DATA</div>
<div class="abs" style="left:229.6px;top:136.0px;font-size:14.5px;line-height:18px;font-weight:normal;color:#fff;letter-spacing:0.000px;white-space:nowrap;-webkit-text-stroke:.25px #fff;transform:scaleX(0.9645);transform-origin:0 50%;">90%</div>
<div class="abs" style="left:37.4px;top:177.0px;font-size:23.5px;line-height:29px;font-weight:bold;color:#fff;letter-spacing:0.000px;white-space:nowrap;-webkit-text-stroke:.3px #fff;transform:scaleX(0.8219);transform-origin:0 50%;">7.21</div>
<div class="abs" style="left:83.7px;top:188.4px;font-size:12.3px;line-height:15px;font-weight:bold;color:#fff;letter-spacing:0.000px;white-space:nowrap;-webkit-text-stroke:.2px #fff;transform:scaleX(0.8996);transform-origin:0 50%;">GB</div>
<div class="abs" style="left:37.4px;top:231.4px;font-size:13px;line-height:16px;font-weight:normal;color:#fff;letter-spacing:0.000px;white-space:nowrap;transform:scaleX(0.9814);transform-origin:0 50%;">More Info</div>
<svg class="abs" style="left:232.5px;top:201.0px" width="25" height="40" viewBox="0 0 320 512" preserveAspectRatio="xMidYMid meet"><path d="M182.600 9.400c-12.500-12.500-32.800-12.500-45.300 0l-96 96c-12.500 12.500-12.500 32.800 0 45.300s32.800 12.500 45.300 0L128 109.300V402.700L86.600 361.400c-12.500-12.500-32.800-12.500-45.300 0s-12.500 32.800 0 45.300l96 96c12.500 12.500 32.800 12.500 45.300 0l96-96c12.500-12.500 12.500-32.800 0-45.300s-32.800-12.500-45.300 0L192 402.700V109.300l41.400 41.400c12.500 12.500 32.800 12.500 45.300 0s12.500-32.800 0-45.300l-96-96z" fill="#000"/></svg>
<div class="abs" style="left:298.0px;top:119.0px;width:253.0px;height:146.0px;background:#299cdb;border-radius:4px;box-shadow:0 1px 2px rgba(56,65,74,.15)"></div>
<div class="abs" style="left:314.4px;top:138.1px;font-size:12px;line-height:15px;font-weight:normal;color:#fff;letter-spacing:0.492px;white-space:nowrap;-webkit-text-stroke:.2px #fff;">TALK</div>
<div class="abs" style="left:506.6px;top:136.0px;font-size:14.5px;line-height:18px;font-weight:normal;color:#fff;letter-spacing:0.000px;white-space:nowrap;-webkit-text-stroke:.25px #fff;transform:scaleX(0.9645);transform-origin:0 50%;">99%</div>
<div class="abs" style="left:314.4px;top:177.0px;font-size:23.5px;line-height:29px;font-weight:bold;color:#fff;letter-spacing:0.000px;white-space:nowrap;-webkit-text-stroke:.3px #fff;transform:scaleX(0.9845);transform-origin:0 50%;">99.70</div>
<div class="abs" style="left:381.4px;top:188.4px;font-size:12.3px;line-height:15px;font-weight:bold;color:#fff;letter-spacing:0.372px;white-space:nowrap;-webkit-text-stroke:.2px #fff;">Minutes</div>
<div class="abs" style="left:314.4px;top:231.4px;font-size:13px;line-height:16px;font-weight:normal;color:#fff;letter-spacing:0.000px;white-space:nowrap;transform:scaleX(0.9814);transform-origin:0 50%;">More Info</div>
<svg class="abs" style="left:494.5px;top:201.0px" width="40.5" height="40.5" viewBox="0 0 512 512" preserveAspectRatio="xMidYMid meet"><path d="M164.900 24.600c-7.700-18.600-28-28.500-47.400-23.200l-88 24C12.100 30.200 0 46 0 64C0 311.400 200.600 512 448 512c18 0 33.800-12.100 38.600-29.500l24-88c5.300-19.400-4.600-39.700-23.200-47.400l-96-40c-16.300-6.800-35.200-2.100-46.300 11.600L304.700 368C234.300 334.700 177.300 277.700 144 207.300L193.300 167c13.700-11.200 18.400-30 11.600-46.300l-40-96z" fill="#fff"/></svg>
<div class="abs" style="left:575.0px;top:119.0px;width:252.0px;height:146.0px;background:#0ab39c;border-radius:4px;box-shadow:0 1px 2px rgba(56,65,74,.15)"></div>
<div class="abs" style="left:591.4px;top:138.1px;font-size:12px;line-height:15px;font-weight:normal;color:#fff;letter-spacing:-0.057px;white-space:nowrap;-webkit-text-stroke:.2px #fff;">TEXT</div>
<div class="abs" style="left:782.6px;top:136.0px;font-size:14.5px;line-height:18px;font-weight:normal;color:#fff;letter-spacing:0.000px;white-space:nowrap;-webkit-text-stroke:.25px #fff;transform:scaleX(0.9645);transform-origin:0 50%;">98%</div>
<div class="abs" style="left:591.4px;top:177.0px;font-size:23.5px;line-height:29px;font-weight:bold;color:#fff;letter-spacing:-0.141px;white-space:nowrap;-webkit-text-stroke:.3px #fff;">98</div>
<div class="abs" style="left:626.3px;top:188.4px;font-size:12.3px;line-height:15px;font-weight:bold;color:#fff;letter-spacing:0.000px;white-space:nowrap;-webkit-text-stroke:.2px #fff;transform:scaleX(0.9454);transform-origin:0 50%;">SMS</div>
<div class="abs" style="left:591.4px;top:231.4px;font-size:13px;line-height:16px;font-weight:normal;color:#fff;letter-spacing:0.000px;white-space:nowrap;transform:scaleX(0.9814);transform-origin:0 50%;">More Info</div>
<svg class="abs" style="left:771.3px;top:201.0px" width="40" height="40" viewBox="0 0 512 512" preserveAspectRatio="xMidYMid meet"><path d="M256 448c141.400 0 256-93.100 256-208S397.400 32 256 32S0 125.100 0 240c0 45.100 17.700 86.800 47.700 120.900c-1.900 24.500-11.400 46.300-21.400 62.900c-5.500 9.200-11.100 16.600-15.200 21.600c-2.100 2.500-3.700 4.400-4.900 5.700c-.6 .6-1 1.100-1.300 1.400l-.3 .3c-4.600 4.600-5.900 11.400-3.400 17.400c2.500 6 8.300 9.900 14.800 9.900c28.700 0 57.600-8.900 81.600-19.300c22.900-10 42.400-21.900 54.300-30.600c31.800 11.500 67 17.900 104.100 17.900zM128 208a32 32 0 1 1 0 64 32 32 0 1 1 0-64zm128 0a32 32 0 1 1 0 64 32 32 0 1 1 0-64zm96 32a32 32 0 1 1 64 0 32 32 0 1 1 -64 0z" fill="#000"/></svg>
<div class="abs" style="left:851.0px;top:119.0px;width:253.0px;height:146.0px;background:#f06548;border-radius:4px;box-shadow:0 1px 2px rgba(56,65,74,.15)"></div>
<div class="abs" style="left:867.4px;top:138.1px;font-size:12px;line-height:15px;font-weight:normal;color:#fff;letter-spacing:0.145px;white-space:nowrap;-webkit-text-stroke:.2px #fff;">BALANCE</div>
<div class="abs" style="left:867.4px;top:177.0px;font-size:23.5px;line-height:29px;font-weight:bold;color:#fff;letter-spacing:0.897px;white-space:nowrap;-webkit-text-stroke:.3px #fff;">$0.00</div>
<div class="abs" style="left:867.4px;top:231.4px;font-size:13px;line-height:16px;font-weight:normal;color:#fff;letter-spacing:0.000px;white-space:nowrap;transform:scaleX(0.9814);transform-origin:0 50%;">More Info</div>
<svg class="abs" style="left:1043.0px;top:201.0px" width="45" height="40" viewBox="0 0 576 512" preserveAspectRatio="xMidYMid meet"><path d="M64 64C28.700 64 0 92.700 0 128V384c0 35.300 28.700 64 64 64H512c35.300 0 64-28.700 64-64V128c0-35.300-28.700-64-64-64H64zm64 320H64V320c35.300 0 64 28.700 64 64zM64 192V128h64c0 35.300-28.700 64-64 64zM448 384c0-35.300 28.700-64 64-64v64H448zm64-192c-35.300 0-64-28.700-64-64h64v64zM288 160a96 96 0 1 1 0 192 96 96 0 1 1 0-192z" fill="#fff"/></svg>
<div class="abs" style="left:21.0px;top:305.0px;width:1083.0px;height:1.0px;background:#c5c6c8"></div>
<div class="abs" style="left:21.3px;top:320.8px;font-size:20px;line-height:25px;font-weight:normal;color:#495057;letter-spacing:1.033px;white-space:nowrap;-webkit-text-stroke:.3px #495057;">Current Balance</div>
<div class="abs" style="left:21.0px;top:353.3px;width:1083.0px;height:80.0px;background:#f2f5f8;border-radius:4px"></div>
<svg class="abs" style="left:37.0px;top:372.8px" width="25" height="40" viewBox="0 0 320 512" preserveAspectRatio="xMidYMid meet"><path d="M182.600 9.400c-12.500-12.500-32.800-12.500-45.300 0l-96 96c-12.500 12.500-12.500 32.800 0 45.300s32.800 12.500 45.300 0L128 109.300V402.700L86.600 361.400c-12.500-12.500-32.800-12.500-45.300 0s-12.500 32.800 0 45.300l96 96c12.500 12.500 32.800 12.500 45.300 0l96-96c12.500-12.500 12.500-32.800 0-45.300s-32.800-12.500-45.300 0L192 402.700V109.300l41.400 41.400c12.500 12.500 32.800 12.500 45.300 0s12.500-32.800 0-45.300l-96-96z" fill="#f7b84b"/></svg>
<div class="abs" style="left:109.0px;top:369.3px;font-size:12.6px;line-height:16px;font-weight:bold;color:#f7b84b;letter-spacing:0.000px;white-space:nowrap;-webkit-text-stroke:.3px #f7b84b;transform:scaleX(0.9596);transform-origin:0 50%;">10%</div>
<div class="abs" style="left:137.4px;top:368.7px;font-size:13px;line-height:16px;font-weight:normal;color:#495057;letter-spacing:0.672px;white-space:nowrap;-webkit-text-stroke:.25px #495057;">Data Used</div>
<div class="abs" style="left:981.2px;top:368.7px;font-size:13px;line-height:16px;font-weight:normal;color:#495057;letter-spacing:1.313px;white-space:nowrap;-webkit-text-stroke:.25px #495057;">remaining</div>
<div class="abs" style="left:950.7px;top:369.3px;font-size:12.6px;line-height:16px;font-weight:bold;color:#f7b84b;letter-spacing:0.741px;white-space:nowrap;-webkit-text-stroke:.3px #f7b84b;">90%</div>
<div class="abs" style="left:109.0px;top:393.0px;width:940.0px;height:10.0px;background:#fef2e2"></div>
<div class="abs" style="left:109.0px;top:393.0px;width:94.0px;height:10.0px;background:#f7b84b"></div>
<svg class="abs" style="left:1071.5px;top:382.8px" width="18" height="19" viewBox="0 0 18 19" fill="none" stroke="#1a1d21" stroke-width="2.2" stroke-linecap="round" stroke-linejoin="round"><path d="M9 17.4 V2.4 M2.2 9.2 L9 2.4 L15.8 9.2"/></svg>
<div class="abs" style="left:21.0px;top:433.0px;width:1083.0px;height:173.5px;background:#fff;border-radius:0 0 4px 4px;box-shadow:0 1px 2px rgba(56,65,74,.18)"></div>
<div class="abs" style="left:37.0px;top:449.0px;width:1051.0px;height:118.0px;background:#fff;border-radius:4px;box-shadow:0 1px 2px rgba(56,65,74,.2)"></div>
<div class="abs" style="left:37.0px;top:515.0px;width:1051.0px;height:1.0px;background:#e9ebec"></div>
<div class="abs" style="left:53.0px;top:473.7px;font-size:13px;line-height:16px;font-weight:normal;color:#212529;letter-spacing:0.000px;white-space:nowrap;">PrepaidBasic Data on Norfolk</div>
<div class="abs" style="left:400.9px;top:465.4px;font-size:12.6px;line-height:16px;font-weight:bold;color:#f7b84b;letter-spacing:0.000px;white-space:nowrap;-webkit-text-stroke:.3px #f7b84b;transform:scaleX(0.9596);transform-origin:0 50%;">10%</div>
<div class="abs" style="left:429.3px;top:464.8px;font-size:13px;line-height:16px;font-weight:normal;color:#495057;letter-spacing:0.672px;white-space:nowrap;-webkit-text-stroke:.25px #495057;">Data Used</div>
<div class="abs" style="left:1004.1px;top:464.8px;font-size:13px;line-height:16px;font-weight:normal;color:#495057;letter-spacing:1.313px;white-space:nowrap;-webkit-text-stroke:.25px #495057;">remaining</div>
<div class="abs" style="left:973.6px;top:465.4px;font-size:12.6px;line-height:16px;font-weight:bold;color:#f7b84b;letter-spacing:0.741px;white-space:nowrap;-webkit-text-stroke:.3px #f7b84b;">90%</div>
<div class="abs" style="left:400.9px;top:489.0px;width:670.8px;height:10.0px;background:#fdf1dc"></div>
<div class="abs" style="left:400.9px;top:489.0px;width:67.1px;height:10.0px;background:#f7b84b"></div>
<div class="abs" style="left:227.2px;top:533.6px;font-size:13px;line-height:16px;font-weight:normal;color:#212529;letter-spacing:0.000px;white-space:nowrap;">Expires 27 days from now</div>
<div class="abs" style="left:746.4px;top:533.6px;font-size:13px;line-height:16px;font-weight:normal;color:#212529;letter-spacing:0.000px;white-space:nowrap;">7.21 GB of Data remaining</div>
<div class="abs" style="left:21.0px;top:631.0px;width:1083.0px;height:80.0px;background:#f2f5f8;border-radius:4px"></div>
<svg class="abs" style="left:36.8px;top:650.8px" width="40.5" height="40.5" viewBox="0 0 512 512" preserveAspectRatio="xMidYMid meet"><path d="M164.900 24.600c-7.700-18.600-28-28.500-47.400-23.200l-88 24C12.100 30.200 0 46 0 64C0 311.400 200.600 512 448 512c18 0 33.800-12.100 38.600-29.500l24-88c5.300-19.400-4.600-39.700-23.200-47.400l-96-40c-16.300-6.800-35.200-2.100-46.300 11.600L304.700 368C234.300 334.700 177.300 277.700 144 207.300L193.300 167c13.700-11.200 18.400-30 11.600-46.300l-40-96z" fill="#299cdb"/></svg>
<div class="abs" style="left:109.0px;top:647.0px;font-size:12.6px;line-height:16px;font-weight:bold;color:#299cdb;letter-spacing:0.000px;white-space:nowrap;-webkit-text-stroke:.3px #299cdb;transform:scaleX(0.8900);transform-origin:0 50%;">1%</div>
<div class="abs" style="left:129.0px;top:646.4px;font-size:13px;line-height:16px;font-weight:normal;color:#495057;letter-spacing:0.640px;white-space:nowrap;-webkit-text-stroke:.25px #495057;">Talk Used</div>
<div class="abs" style="left:981.2px;top:646.4px;font-size:13px;line-height:16px;font-weight:normal;color:#495057;letter-spacing:1.313px;white-space:nowrap;-webkit-text-stroke:.25px #495057;">remaining</div>
<div class="abs" style="left:950.7px;top:647.0px;font-size:12.6px;line-height:16px;font-weight:bold;color:#299cdb;letter-spacing:0.741px;white-space:nowrap;-webkit-text-stroke:.3px #299cdb;">99%</div>
<div class="abs" style="left:109.0px;top:671.0px;width:940.0px;height:10.0px;background:#dcecf8"></div>
<div class="abs" style="left:109.0px;top:671.0px;width:9.4px;height:10.0px;background:#299cdb"></div>
<svg class="abs" style="left:1071.5px;top:661px" width="18" height="19" viewBox="0 0 18 19" fill="none" stroke="#1a1d21" stroke-width="2.2" stroke-linecap="round" stroke-linejoin="round"><path d="M9 1.6 V16.6 M2.2 9.8 L9 16.6 L15.8 9.8"/></svg>
<div class="abs" style="left:21.0px;top:711.0px;width:1083.0px;height:80.5px;background:#f2f5f8;border-radius:4px"></div>
<svg class="abs" style="left:36.8px;top:731.0px" width="40.5" height="40.5" viewBox="0 0 512 512" preserveAspectRatio="xMidYMid meet"><path d="M256 448c141.400 0 256-93.100 256-208S397.400 32 256 32S0 125.100 0 240c0 45.100 17.700 86.800 47.700 120.900c-1.900 24.500-11.400 46.300-21.400 62.900c-5.500 9.200-11.100 16.600-15.200 21.600c-2.100 2.500-3.700 4.400-4.900 5.700c-.6 .6-1 1.100-1.300 1.400l-.3 .3c-4.600 4.600-5.900 11.400-3.400 17.400c2.500 6 8.300 9.900 14.800 9.900c28.700 0 57.600-8.900 81.600-19.300c22.900-10 42.400-21.900 54.300-30.600c31.800 11.500 67 17.900 104.100 17.900zM128 208a32 32 0 1 1 0 64 32 32 0 1 1 0-64zm128 0a32 32 0 1 1 0 64 32 32 0 1 1 0-64zm96 32a32 32 0 1 1 64 0 32 32 0 1 1 -64 0z" fill="#0ab39c"/></svg>
<div class="abs" style="left:109.0px;top:727.0px;font-size:12.6px;line-height:16px;font-weight:bold;color:#0ab39c;letter-spacing:0.397px;white-space:nowrap;-webkit-text-stroke:.3px #0ab39c;">2%</div>
<div class="abs" style="left:131.5px;top:726.4px;font-size:13px;line-height:16px;font-weight:normal;color:#495057;letter-spacing:0.536px;white-space:nowrap;-webkit-text-stroke:.25px #495057;">Text Used</div>
<div class="abs" style="left:981.2px;top:726.4px;font-size:13px;line-height:16px;font-weight:normal;color:#495057;letter-spacing:1.313px;white-space:nowrap;-webkit-text-stroke:.25px #495057;">remaining</div>
<div class="abs" style="left:950.7px;top:727.0px;font-size:12.6px;line-height:16px;font-weight:bold;color:#0ab39c;letter-spacing:0.741px;white-space:nowrap;-webkit-text-stroke:.3px #0ab39c;">98%</div>
<div class="abs" style="left:109.0px;top:751.0px;width:940.0px;height:10.0px;background:#daf4f0"></div>
<div class="abs" style="left:109.0px;top:751.0px;width:19.0px;height:10.0px;background:#0ab39c"></div>
<svg class="abs" style="left:1071.5px;top:741px" width="18" height="19" viewBox="0 0 18 19" fill="none" stroke="#1a1d21" stroke-width="2.2" stroke-linecap="round" stroke-linejoin="round"><path d="M9 1.6 V16.6 M2.2 9.8 L9 16.6 L15.8 9.8"/></svg>
<div class="abs" style="left:21.0px;top:791.5px;width:1083.0px;height:46.5px;background:#f2f5f8;border-radius:4px"></div>
</div>

</div>
</body>
</html>
